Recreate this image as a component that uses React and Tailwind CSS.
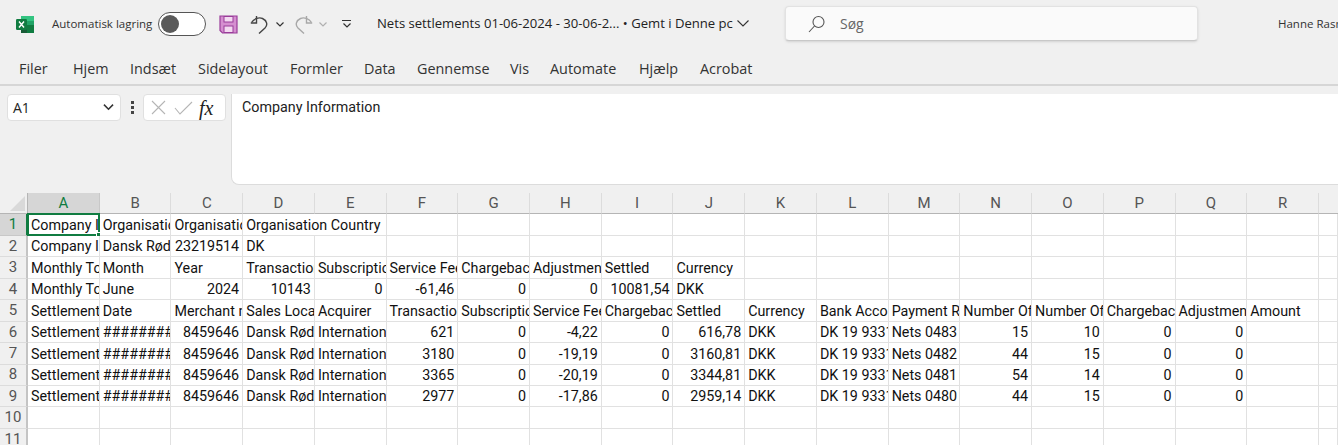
import React from "react";

const menus = [
  ["Filer", "w-[54px]"],
  ["Hjem", "w-[57px]"],
  ["Indsæt", "w-[68px]"],
  ["Sidelayout", "w-[92px]"],
  ["Formler", "w-[74px]"],
  ["Data", "w-[53px]"],
  ["Gennemse", "w-[93px]"],
  ["Vis", "w-[40px]"],
  ["Automate", "w-[89px]"],
  ["Hjælp", "w-[61px]"],
  ["Acrobat", "w-[70px]"],
];

const columns = "ABCDEFGHIJKLMNOPQR".split("");

const rows = [
  ["Company Information", "Organisation Name", "Organisation Number", { text: "Organisation Country", span: 2 }],
  ["Company Information", "Dansk Røde Kors", "23219514", "DK"],
  ["Monthly Totals", "Month", "Year", "Transactions", "Subscription", "Service Fee", "Chargebacks", "Adjustments", "Settled", "Currency"],
  ["Monthly Totals", "June", "2024", "10143", "0", "-61,46", "0", "0", "10081,54", "DKK"],
  ["Settlements", "Date", "Merchant number", "Sales Location", "Acquirer", "Transactions", "Subscription", "Service Fee", "Chargebacks", "Settled", "Currency", "Bank Account", "Payment Reference", "Number Of", "Number Of", "Chargebacks", "Adjustment", "Amount"],
  ["Settlements", "########", "8459646", "Dansk Røde Kors", "International", "621", "0", "-4,22", "0", "616,78", "DKK", "DK 19 9331", "Nets 0483", "15", "10", "0", "0"],
  ["Settlements", "########", "8459646", "Dansk Røde Kors", "International", "3180", "0", "-19,19", "0", "3160,81", "DKK", "DK 19 9331", "Nets 0482", "44", "15", "0", "0"],
  ["Settlements", "########", "8459646", "Dansk Røde Kors", "International", "3365", "0", "-20,19", "0", "3344,81", "DKK", "DK 19 9331", "Nets 0481", "54", "14", "0", "0"],
  ["Settlements", "########", "8459646", "Dansk Røde Kors", "International", "2977", "0", "-17,86", "0", "2959,14", "DKK", "DK 19 9331", "Nets 0480", "44", "15", "0", "0"],
  [],
  [],
  [],
];

const ExcelLogo = () => (
  <svg width="19" height="19" viewBox="0 0 19 19">
    <rect x="5" y="1" width="13" height="17" rx="1.5" fill="#21a366" />
    <rect x="5" y="1" width="13" height="5" fill="#33c481" />
    <rect x="11" y="10" width="7" height="8" fill="#107c41" />
    <rect x="5" y="10" width="6" height="8" fill="#185c37" />
    <rect x="0" y="4" width="11" height="11" rx="1.2" fill="#107c41" />
    <path d="M3 6.5 L8 12.5 M8 6.5 L3 12.5" stroke="#fff" strokeWidth="1.4" />
  </svg>
);

const SaveIcon = () => (
  <svg width="19" height="19" viewBox="0 0 19 19">
    <path d="M1 1 H18 V18 H3.5 L1 15.5 Z" fill="#d58fd0" stroke="#9a3d9a" strokeWidth="1.2" />
    <rect x="5" y="1.5" width="9" height="5.5" fill="#f3d9f1" stroke="#9a3d9a" />
    <rect x="5" y="11" width="9" height="6.5" fill="#f3d9f1" stroke="#9a3d9a" />
  </svg>
);

const UndoIcon = ({ color, flip }) => (
  <svg width="19" height="19" viewBox="0 0 19 19" className={flip ? "-scale-x-100" : ""} fill="none" stroke={color} strokeWidth="1.4">
    <path d="M6.5 1 V8 H0.8" />
    <path d="M1.5 7.5 C4 3.5 9 2 12.5 3.5 C17 5.5 18 10 15 13 L9 18.5" />
  </svg>
);

const Chevron = ({ color = "#333", w = 8 }) => (
  <svg width={w} height={w / 2 + 1} viewBox="0 0 8 5" fill="none" stroke={color} strokeWidth="1.2">
    <path d="M0.5 0.5 L4 4 L7.5 0.5" />
  </svg>
);

function Cell({ value, rowIndex, colIndex }) {
  const text = typeof value === "object" && value ? value.text : value;
  const span = typeof value === "object" && value ? value.span : 1;
  const numeric = /^-?[\d,]+$/.test(text || "");
  const selected = rowIndex === 0 && colIndex === 0;

  return (
    <div
      className={`relative flex items-end border-r border-b border-[#e1e1e1] px-[3px] text-[14.3px] leading-[20px] whitespace-nowrap text-[#111] ${
        numeric ? "justify-end" : "justify-start"
      } ${span === 2 ? "col-span-2" : ""} ${selected ? "" : numeric ? "overflow-hidden" : "overflow-hidden pr-0"}`}
    >
      {selected ? <span className="block w-[68px] shrink-0 overflow-hidden">{text}</span> : text}
      {selected && (
        <div className="absolute -left-[1px] -top-[1px] -right-[1px] -bottom-[1px] border-2 border-[#107c41]">
          <div className="absolute -right-[3px] -bottom-[3px] w-[5px] h-[5px] bg-[#107c41] border border-white" />
        </div>
      )}
    </div>
  );
}

export default function App() {
  return (
    <div className="w-[1338px] h-[445px] overflow-hidden bg-white font-['Open_Sans',sans-serif] text-[#242424]">
      {/* title bar + menu */}
      <div className="h-[86px] bg-[#f0f0f0] border-b-2 border-[#d6d6d6] overflow-hidden">
        <div className="flex items-center h-[48px] pl-[16px] whitespace-nowrap *:shrink-0">
          <ExcelLogo />
          <span className="ml-[17px] w-[106px] text-[11.5px] text-[#333]">Automatisk lagring</span>
          <div className="flex items-center w-[48px] h-[24px] rounded-full border border-[#555] bg-white pl-[2px]">
            <div className="w-[18px] h-[18px] rounded-full bg-[#5a5a5a]" />
          </div>
          <div className="ml-[13px]"><SaveIcon /></div>
          <div className="ml-[12px]"><UndoIcon color="#444" /></div>
          <div className="ml-[7px]"><Chevron /></div>
          <div className="ml-[10px]"><UndoIcon color="#a8a8a8" flip /></div>
          <div className="ml-[6px]"><Chevron color="#b0b0b0" /></div>
          <div className="ml-[15px] flex flex-col items-center gap-[2px]">
            <div className="w-[9px] h-px bg-[#333]" />
            <Chevron />
          </div>
          <div className="ml-[26px] w-[408px] flex items-center gap-[4px]">
            <span className="text-[13.1px] text-[#222]">Nets settlements 01-06-2024 - 30-06-2... • Gemt i Denne pc</span>
            <svg width="12" height="7" viewBox="0 0 12 7" fill="none" stroke="#333" strokeWidth="1.1" className="shrink-0">
              <path d="M0.5 0.5 L6 6 L11.5 0.5" />
            </svg>
          </div>
          <div className="flex items-center w-[413px] h-[35px] -mt-[1px] bg-[#fafafa] rounded-[4px] border border-[#e2e2e2] border-b-[#c8c8c8] shadow-sm pl-[22px]">
            <svg width="18" height="18" viewBox="0 0 18 18" fill="none" stroke="#555" strokeWidth="1.1">
              <circle cx="10.5" cy="7" r="5.5" />
              <path d="M6.5 11 L1 17" />
            </svg>
            <span className="ml-[14px] text-[14px] text-[#666]">Søg</span>
          </div>
          <span className="ml-[80px] text-[11.5px] text-[#333]">Hanne Rasmussen</span>
        </div>
        <div className="flex items-center h-[42px] pl-[19px] text-[14.4px] text-[#333]">
          {menus.map(([label, width]) => (
            <span key={label} className={width}>{label}</span>
          ))}
        </div>
      </div>

      {/* formula bar */}
      <div className="flex items-start h-[107px] pt-[8px] pl-[7px] bg-[#f0f0f0]">
        <div className="flex items-center justify-between w-[114px] h-[27px] bg-white rounded-[4px] border border-[#e0e0e0] pl-[5px] pr-[6px] text-[14px]">
          A1
          <Chevron w={11} />
        </div>
        <div className="flex flex-col gap-[2px] ml-[10px] mt-[7px] w-[3px]">
          <div className="w-[3px] h-[3px] bg-[#444]" />
          <div className="w-[3px] h-[3px] bg-[#444]" />
          <div className="w-[3px] h-[3px] bg-[#444]" />
        </div>
        <div className="flex items-center w-[83px] h-[27px] ml-[9px] bg-white rounded-[4px] border border-[#e0e0e0] pl-[7px]">
          <svg width="15" height="15" viewBox="0 0 15 15" fill="none" stroke="#b5b5b5" strokeWidth="1.1">
            <path d="M1 1 L14 14 M14 1 L1 14" />
          </svg>
          <svg width="19" height="14" viewBox="0 0 19 14" fill="none" stroke="#b5b5b5" strokeWidth="1.1" className="ml-[8px]">
            <path d="M1 7 L6 13 L18 1" />
          </svg>
          <span className="ml-[6px] font-['Liberation_Serif',serif] italic text-[20px] leading-none text-[#222]">fx</span>
        </div>
        <div className="flex-1 h-[91px] ml-[5px] bg-white rounded-bl-[8px] border-l border-b border-[#dcdcdc] pl-[10px] pt-[3px] font-['Roboto',sans-serif] text-[14.3px] text-[#222]">
          Company Information
        </div>
      </div>

      {/* sheet */}
      <div className="grid grid-cols-[28px_repeat(18,71.72px)_1fr] auto-rows-[21.44px] font-['Roboto',sans-serif]">
        <div className="flex items-end bg-[#f0f0f0] border-b border-r border-[#b5b5b5] pl-[10px] pb-[2px]">
          <svg width="15" height="15" viewBox="0 0 15 15"><path d="M15 0 V15 H0 Z" fill="#d9d9d9" /></svg>
        </div>
        {columns.map((c) => (
          <div
            key={c}
            className={`flex items-center justify-center border-b border-r text-[15px] ${
              c === "A" ? "bg-[#d6d6d6] border-[#107c41] border-r-[#c8c8c8] text-[#107c41]" : "bg-[#f0f0f0] border-b-[#b5b5b5] border-r-[#dcdcdc] text-[#555]"
            }`}
          >
            {c}
          </div>
        ))}
        <div className="bg-[#f0f0f0] border-b border-[#b5b5b5]" />

        {rows.map((row, r) => {
          const used = row.reduce((n, v) => n + (typeof v === "object" ? v.span : 1), 0);
          const blanks = Array.from({ length: 19 - used }, () => "");
          return (
            <React.Fragment key={r}>
              <div
                className={`flex items-center justify-center border-r-2 border-b text-[15px] ${
                  r === 0 ? "bg-[#d6d6d6] text-[#107c41] border-r-[#107c41] border-b-[#c8c8c8]" : "bg-[#f0f0f0] text-[#555] border-r-[#c4c4c4] border-b-[#dcdcdc]"
                }`}
              >
                {r + 1}
              </div>
              {[...row, ...blanks].map((value, c) => (
                <Cell key={c} value={value} rowIndex={r} colIndex={c} />
              ))}
            </React.Fragment>
          );
        })}
      </div>
    </div>
  );
}
